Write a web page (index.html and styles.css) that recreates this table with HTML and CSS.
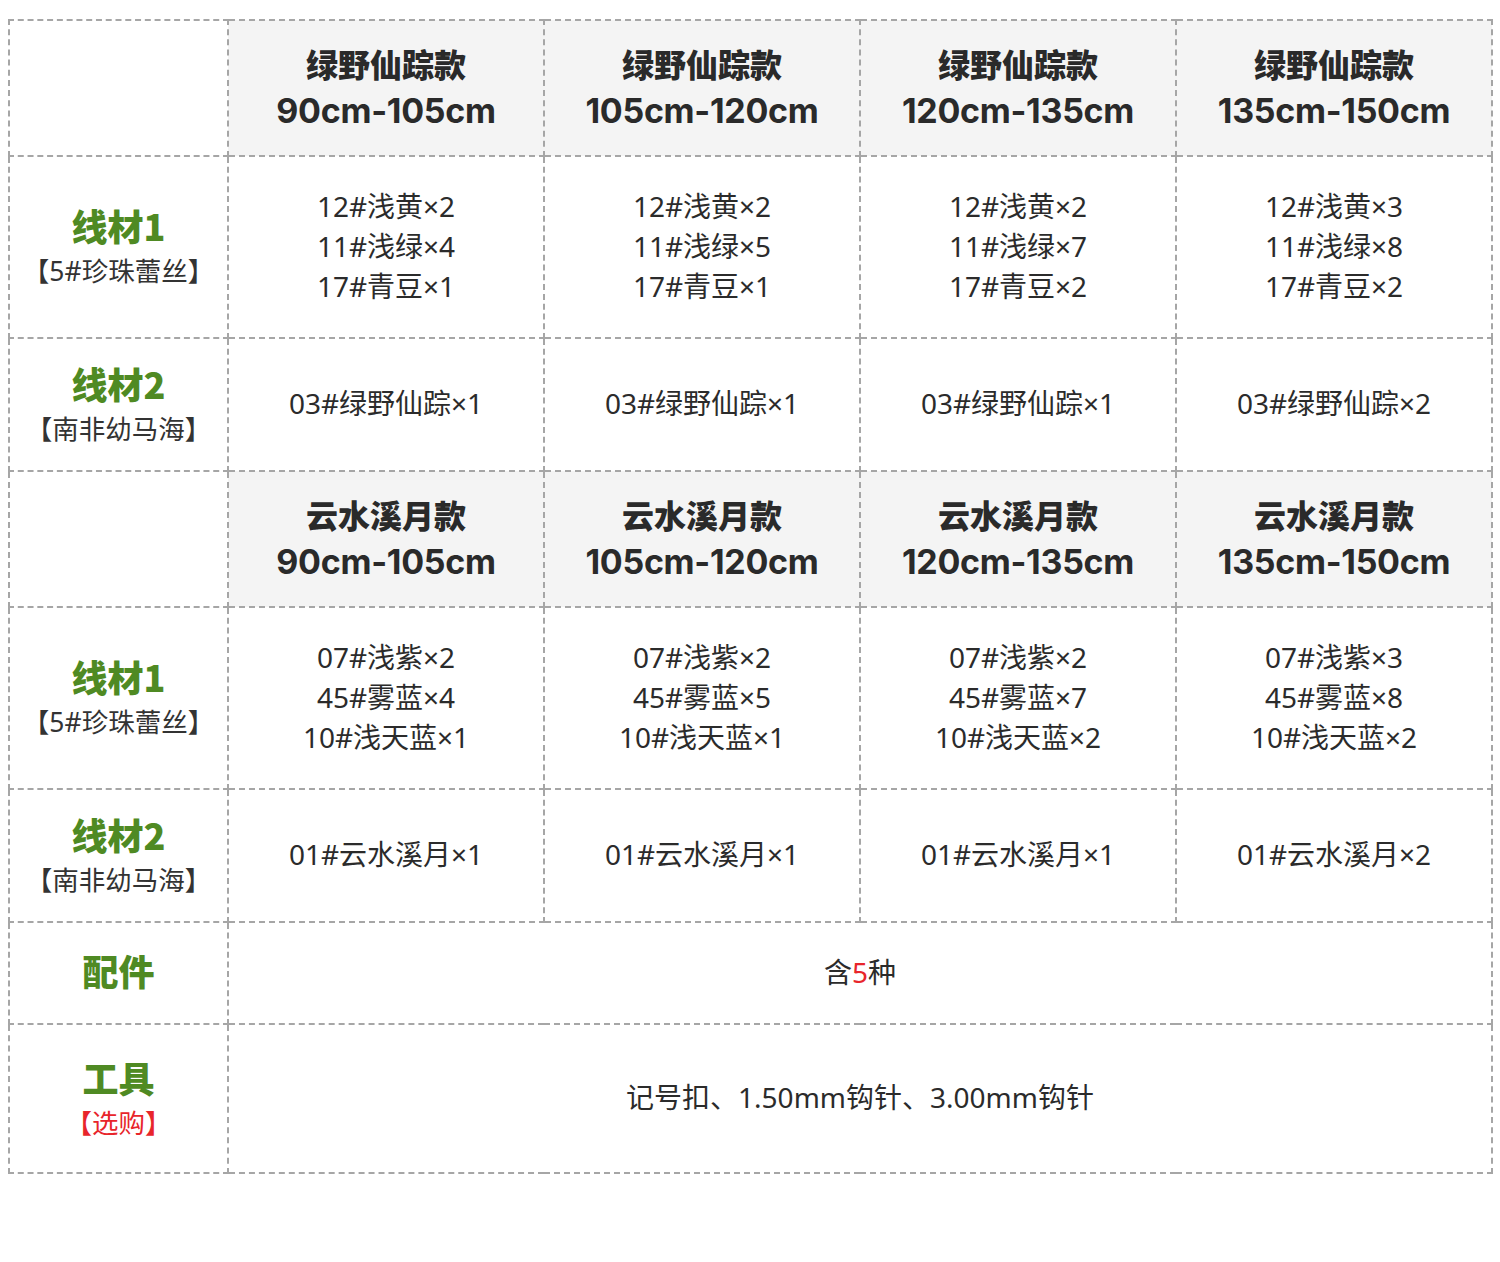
FILE: index.html
```html
<!DOCTYPE html>
<html lang="zh">
<head>
<meta charset="utf-8">
<link rel="stylesheet" href="styles.css">
</head>
<body>
<table class="spec">
  <colgroup>
    <col class="c-label"><col class="c-size"><col class="c-size"><col class="c-size"><col class="c-size">
  </colgroup>
  <tr class="r-head">
    <td class="blank"></td>
    <th><span class="zh">绿野仙踪款</span><span class="en">90cm-105cm</span></th>
    <th><span class="zh">绿野仙踪款</span><span class="en">105cm-120cm</span></th>
    <th><span class="zh">绿野仙踪款</span><span class="en">120cm-135cm</span></th>
    <th><span class="zh">绿野仙踪款</span><span class="en">135cm-150cm</span></th>
  </tr>
  <tr class="r-three">
    <td class="label"><span class="name">线材1</span><span class="sub">【5#珍珠蕾丝】</span></td>
    <td class="val">12#浅黄×2<br>11#浅绿×4<br>17#青豆×1</td>
    <td class="val">12#浅黄×2<br>11#浅绿×5<br>17#青豆×1</td>
    <td class="val">12#浅黄×2<br>11#浅绿×7<br>17#青豆×2</td>
    <td class="val">12#浅黄×3<br>11#浅绿×8<br>17#青豆×2</td>
  </tr>
  <tr class="r-one">
    <td class="label"><span class="name">线材2</span><span class="sub">【南非幼马海】</span></td>
    <td class="val">03#绿野仙踪×1</td>
    <td class="val">03#绿野仙踪×1</td>
    <td class="val">03#绿野仙踪×1</td>
    <td class="val">03#绿野仙踪×2</td>
  </tr>
  <tr class="r-head">
    <td class="blank"></td>
    <th><span class="zh">云水溪月款</span><span class="en">90cm-105cm</span></th>
    <th><span class="zh">云水溪月款</span><span class="en">105cm-120cm</span></th>
    <th><span class="zh">云水溪月款</span><span class="en">120cm-135cm</span></th>
    <th><span class="zh">云水溪月款</span><span class="en">135cm-150cm</span></th>
  </tr>
  <tr class="r-three">
    <td class="label"><span class="name">线材1</span><span class="sub">【5#珍珠蕾丝】</span></td>
    <td class="val">07#浅紫×2<br>45#雾蓝×4<br>10#浅天蓝×1</td>
    <td class="val">07#浅紫×2<br>45#雾蓝×5<br>10#浅天蓝×1</td>
    <td class="val">07#浅紫×2<br>45#雾蓝×7<br>10#浅天蓝×2</td>
    <td class="val">07#浅紫×3<br>45#雾蓝×8<br>10#浅天蓝×2</td>
  </tr>
  <tr class="r-one">
    <td class="label"><span class="name">线材2</span><span class="sub">【南非幼马海】</span></td>
    <td class="val">01#云水溪月×1</td>
    <td class="val">01#云水溪月×1</td>
    <td class="val">01#云水溪月×1</td>
    <td class="val">01#云水溪月×2</td>
  </tr>
  <tr class="r-parts">
    <td class="label solo"><span class="name">配件</span></td>
    <td class="val" colspan="4">含<span class="red">5</span>种</td>
  </tr>
  <tr class="r-tools">
    <td class="label"><span class="name">工具</span><span class="sub red">【选购】</span></td>
    <td class="val" colspan="4">记号扣、1.50mm钩针、3.00mm钩针</td>
  </tr>
</table>
</body>
</html>
```
FILE: styles.css
```css
html, body {
  margin: 0;
  padding: 0;
  background: #ffffff;
}
body {
  padding: 19px 8px 0 8px;
  font-family: "Noto Sans", "Noto Sans CJK SC", sans-serif;
  color: #2b2b2b;
}
.spec {
  border-collapse: collapse;
  width: 1484px;
  table-layout: fixed;
}
.c-label { width: 219px; }
.c-size { width: 316px; }
.spec td, .spec th {
  border: 2px dashed #a6a6a6;
  text-align: center;
  vertical-align: middle;
  padding: 0;
}
.spec th {
  background: #f4f4f4;
  font-weight: 700;
  color: #2a2a2a;
  padding-bottom: 2px;
}
.zh {
  display: block;
  font-family: "Noto Sans CJK SC", sans-serif;
  font-weight: 900;
  font-size: 32px;
  line-height: 45px;
}
.en {
  display: block;
  font-family: "Inter", "Noto Sans CJK SC", sans-serif;
  font-weight: 700;
  font-size: 34px;
  line-height: 45px;
  margin-top: 2px;
  letter-spacing: -0.3px;
}
.r-head { height: 136px; }
.r-three { height: 182px; }
.r-one { height: 133px; }
.r-parts { height: 102px; }
.r-tools { height: 149px; }
.val {
  font-size: 28px;
  line-height: 40px;
  color: #2b2b2b;
  padding-bottom: 3px !important;
}
.label {
  padding-top: 2px !important;
}
.label.solo {
  padding-top: 0 !important;
  padding-bottom: 6px !important;
}
.label .name {
  display: block;
  font-family: "Noto Sans CJK SC", sans-serif;
  font-weight: 900;
  font-size: 36px;
  line-height: 46px;
  color: #4f8a23;
}
.label .sub {
  display: block;
  font-size: 26.5px;
  line-height: 46px;
  color: #333333;
}
.red { color: #e8252b !important; }
```
